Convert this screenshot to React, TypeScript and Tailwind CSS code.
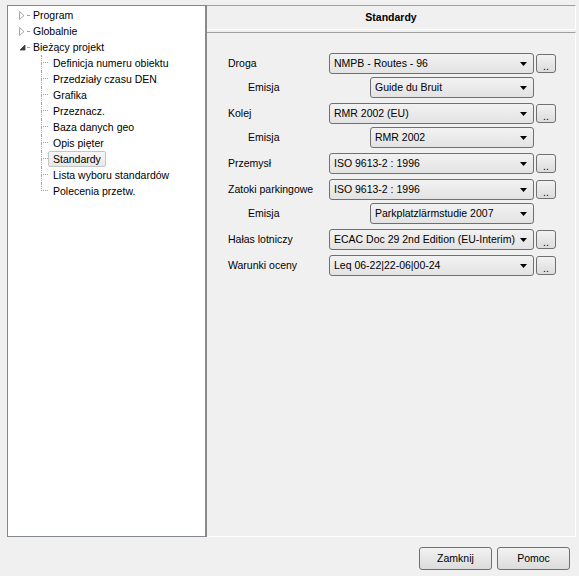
type TreeChild = { label: string; selected?: boolean };

const children: TreeChild[] = [
  { label: "Definicja numeru obiektu" },
  { label: "Przedziały czasu DEN" },
  { label: "Grafika" },
  { label: "Przeznacz." },
  { label: "Baza danych geo" },
  { label: "Opis pięter" },
  { label: "Standardy", selected: true },
  { label: "Lista wyboru standardów" },
  { label: "Polecenia przetw." },
];

const CollapsedArrow = () => (
  <svg width="6" height="9" viewBox="0 0 6 9" className="block">
    <path d="M0.5 0.5 L5 4.5 L0.5 8.5 Z" fill="white" stroke="#a6a6a6" strokeWidth="1" />
  </svg>
);

const ExpandedArrow = () => (
  <svg width="7" height="7" viewBox="0 0 7 7" className="block">
    <path d="M6 1 L6 6 L1 6 Z" fill="#3c3c3c" stroke="#3c3c3c" strokeWidth="0.8" />
  </svg>
);

const TopRow = ({ label, expanded }: { label: string; expanded?: boolean }) => (
  <div className="flex items-center h-[16px]">
    <div className="w-[8px] ml-[11px] flex items-center justify-start">
      {expanded ? <ExpandedArrow /> : <CollapsedArrow />}
    </div>
    <div className="w-[2px] border-t border-dotted border-[#a0a0a0]"></div>
    <div className="px-[3px] border border-transparent leading-[14px]">{label}</div>
  </div>
);

const ChildRow = ({ item, last }: { item: TreeChild; last: boolean }) => (
  <div className="flex h-[16px] pl-[33px]">
    <div className="flex flex-col w-[7px]">
      <div className="h-[8px] border-l border-b border-dotted border-[#a0a0a0]"></div>
      <div className={last ? "h-[8px]" : "h-[8px] border-l border-dotted border-[#a0a0a0]"}></div>
    </div>
    <div
      className={
        item.selected
          ? "px-[4px] border border-[#c4c4c4] rounded-[2px] bg-gradient-to-b from-[#f6f6f6] to-[#e8e8e8] leading-[14px]"
          : "px-[4px] border border-transparent leading-[14px]"
      }
    >
      {item.label}
    </div>
  </div>
);

const Tree = () => (
  <div className="w-[200px] h-[532px] bg-white border-l border-t border-b border-[#828790] border-r-2 border-r-[#8a8a8a] pt-[1px]">
    <TopRow label="Program" />
    <TopRow label="Globalnie" />
    <TopRow label="Bieżący projekt" expanded />
    {children.map((c, i) => (
      <ChildRow key={c.label} item={c} last={i === children.length - 1} />
    ))}
  </div>
);

const Combo = ({ value, width }: { value: string; width: string }) => (
  <div
    className={`${width} h-[21px] flex items-center justify-between border border-[#707070] rounded-[3px] bg-gradient-to-b from-[#f2f2f2] to-[#e3e3e3] pl-[4px] pr-[6px]`}
  >
    <span className="whitespace-nowrap">{value}</span>
    <svg width="7" height="4" viewBox="0 0 7 4" className="block shrink-0">
      <path d="M0 0 H7 L3.5 4 Z" fill="#000" />
    </svg>
  </div>
);

const DotsButton = () => (
  <div className="ml-[2px] w-[20px] h-[19px] border border-[#707070] rounded-[3px] bg-gradient-to-b from-[#f2f2f2] to-[#dcdcdc] flex items-end justify-center pb-[1px] leading-[10px]">
    ..
  </div>
);

const rows = [
  { label: "Droga", value: "NMPB - Routes - 96" },
  { label: "Emisja", value: "Guide du Bruit", sub: true },
  { label: "Kolej", value: "RMR 2002 (EU)" },
  { label: "Emisja", value: "RMR 2002", sub: true },
  { label: "Przemysł", value: "ISO 9613-2 : 1996" },
  { label: "Zatoki parkingowe", value: "ISO 9613-2 : 1996" },
  { label: "Emisja", value: "Parkplatzlärmstudie 2007", sub: true },
  { label: "Hałas lotniczy", value: "ECAC Doc 29 2nd Edition (EU-Interim)" },
  { label: "Warunki oceny", value: "Leq 06-22|22-06|00-24" },
];

const WinButton = ({ label }: { label: string }) => (
  <div className="w-[73px] h-[23px] border border-[#707070] rounded-[3px] bg-gradient-to-b from-[#f2f2f2] to-[#dcdcdc] flex items-center justify-center">
    {label}
  </div>
);

export default function App() {
  return (
    <div className="w-[579px] h-[576px] bg-[#f0f0f0] font-['Liberation_Sans',Arial,sans-serif] text-[10.5px] text-black flex flex-col">
      <div className="flex pt-[5px] pl-[7px] pr-[3px] h-[537px]">
        <Tree />
        <div className="flex-1 flex flex-col">
          <div className="h-[25px] border-t border-t-[#a0a0a0] border-r border-b border-white flex items-center justify-center font-bold">
            Standardy
          </div>
          <div className="mt-[2px] flex-1 border-t border-t-[#a0a0a0] border-r border-b border-white pt-[20px] pl-[21px]">
            {rows.map((r, i) => (
              <div
                key={i}
                className={`flex items-center h-[21px] ${i === 0 ? "" : r.sub ? "mt-[3px]" : "mt-[5px]"}`}
              >
                {r.sub ? (
                  <>
                    <div className="pl-[20px] w-[142px]">{r.label}</div>
                    <Combo value={r.value} width="w-[164px]" />
                  </>
                ) : (
                  <>
                    <div className="w-[101px]">{r.label}</div>
                    <Combo value={r.value} width="w-[205px]" />
                    <DotsButton />
                  </>
                )}
              </div>
            ))}
          </div>
        </div>
      </div>
      <div className="mt-[10px] flex justify-end gap-[5px] pr-[9px]">
        <WinButton label="Zamknij" />
        <WinButton label="Pomoc" />
      </div>
    </div>
  );
}
